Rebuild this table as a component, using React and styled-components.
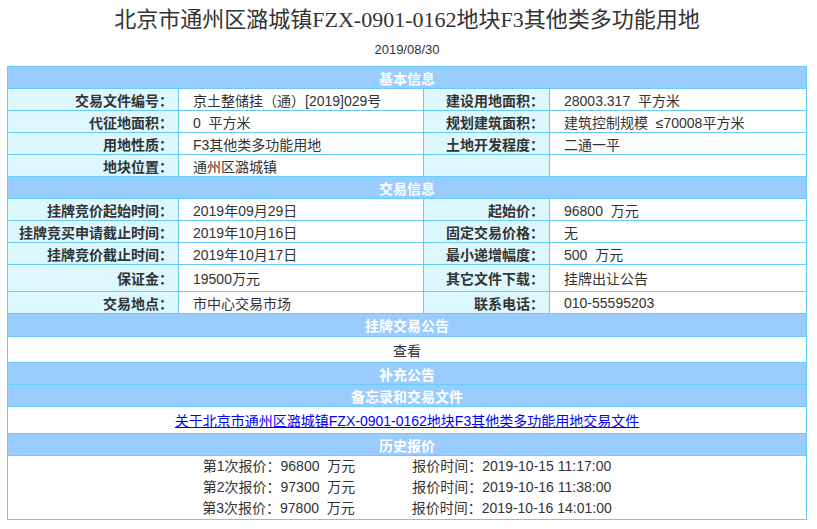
import React from "react";
import styled, { createGlobalStyle } from "styled-components";

const Global = createGlobalStyle`
  html, body { margin: 0; padding: 0; background: #fff; }
  body { font-family: "Liberation Sans", "Noto Sans CJK SC", sans-serif; color: #333; }
`;

const Page = styled.div`
  width: 800px;
  margin-left: 7px;
  padding-top: 5px;
`;

const Title = styled.h1`
  margin: 0;
  height: 30px;
  line-height: 30px;
  text-align: center;
  font-family: "Liberation Serif", "Noto Sans CJK SC", serif;
  font-size: 22px;
  font-weight: normal;
  color: #333;
`;

const DateLine = styled.div`
  margin-top: 5px;
  line-height: 20px;
  font-size: 13px;
  text-align: center;
  color: #333;
`;

const ROWS = [21, 21, 21, 21, 21, 21, 21, 21, 21, 26, 21, 22, 25, 21, 21, 26, 21, 63];

const Grid = styled.div`
  margin-top: 6px;
  display: grid;
  grid-template-columns: 170px 244px 125px 256px;
  grid-template-rows: ${ROWS.map((h) => h + "px").join(" ")};
  gap: 1px;
  padding: 1px;
  background: #66ccff;
  font-size: 14px;
`;

const Cell = styled.div`
  display: flex;
  align-items: center;
  min-width: 0;
  white-space: pre;
`;

const Label = styled(Cell)`
  background: #ddf7fe;
  justify-content: flex-end;
  padding-right: 5px;
  font-weight: bold;
  color: #333;
`;

const Value = styled(Cell)`
  background: #fff;
  padding-left: 14px;
  color: #333;
`;

const Header = styled(Cell)`
  grid-column: 1 / -1;
  background: #99ccff;
  justify-content: center;
  color: #fff;
  font-weight: bold;
`;

const Full = styled(Cell)`
  grid-column: 1 / -1;
  background: #fff;
  justify-content: center;
  color: #333;
`;

const Quotes = styled.div`
  grid-column: 1 / -1;
  background: #fff;
  display: flex;
  flex-direction: column;
  justify-content: center;
  color: #333;
`;

const QuoteLine = styled.div`
  display: flex;
  justify-content: center;
  gap: 57px;
  line-height: 21px;
  white-space: pre;
`;

const Link = styled.a`
  color: #0000ff;
  text-decoration: underline;
  cursor: pointer;
`;

const pairs = [
  ["交易文件编号：", "京土整储挂（通）[2019]029号", "建设用地面积：", "28003.317  平方米"],
  ["代征地面积：", "0  平方米", "规划建筑面积：", "建筑控制规模  ≤70008平方米"],
  ["用地性质：", "F3其他类多功能用地", "土地开发程度：", "二通一平"],
  ["地块位置：", "通州区潞城镇", "", ""],
];

const trade = [
  ["挂牌竞价起始时间：", "2019年09月29日", "起始价：", "96800  万元"],
  ["挂牌竞买申请截止时间：", "2019年10月16日", "固定交易价格：", "无"],
  ["挂牌竞价截止时间：", "2019年10月17日", "最小递增幅度：", "500  万元"],
  ["保证金：", "19500万元", "其它文件下载：", "挂牌出让公告"],
  ["交易地点：", "市中心交易市场", "联系电话：", "010-55595203"],
];

const quotes = [
  ["96800", "2019-10-15 11:17:00"],
  ["97300", "2019-10-16 11:38:00"],
  ["97800", "2019-10-16 14:01:00"],
];

function Row({ r }) {
  return (
    <>
      <Label>{r[0]}</Label>
      <Value>{r[1]}</Value>
      <Label>{r[2]}</Label>
      <Value>{r[3]}</Value>
    </>
  );
}

export default function App() {
  return (
    <>
      <Global />
      <Page>
        <Title>北京市通州区潞城镇FZX-0901-0162地块F3其他类多功能用地</Title>
        <DateLine>2019/08/30</DateLine>
        <Grid>
          <Header>基本信息</Header>
          {pairs.map((r, i) => (
            <Row key={"p" + i} r={r} />
          ))}
          <Header>交易信息</Header>
          {trade.map((r, i) => (
            <Row key={"t" + i} r={r} />
          ))}
          <Header>挂牌交易公告</Header>
          <Full>查看</Full>
          <Header>补充公告</Header>
          <Header>备忘录和交易文件</Header>
          <Full>
            <Link>关于北京市通州区潞城镇FZX-0901-0162地块F3其他类多功能用地交易文件</Link>
          </Full>
          <Header>历史报价</Header>
          <Quotes>
            {quotes.map((q, i) => (
              <QuoteLine key={i}>
                <span>第{i + 1}次报价：{q[0]}  万元</span>
                <span>报价时间：{q[1]}</span>
              </QuoteLine>
            ))}
          </Quotes>
        </Grid>
      </Page>
    </>
  );
}
